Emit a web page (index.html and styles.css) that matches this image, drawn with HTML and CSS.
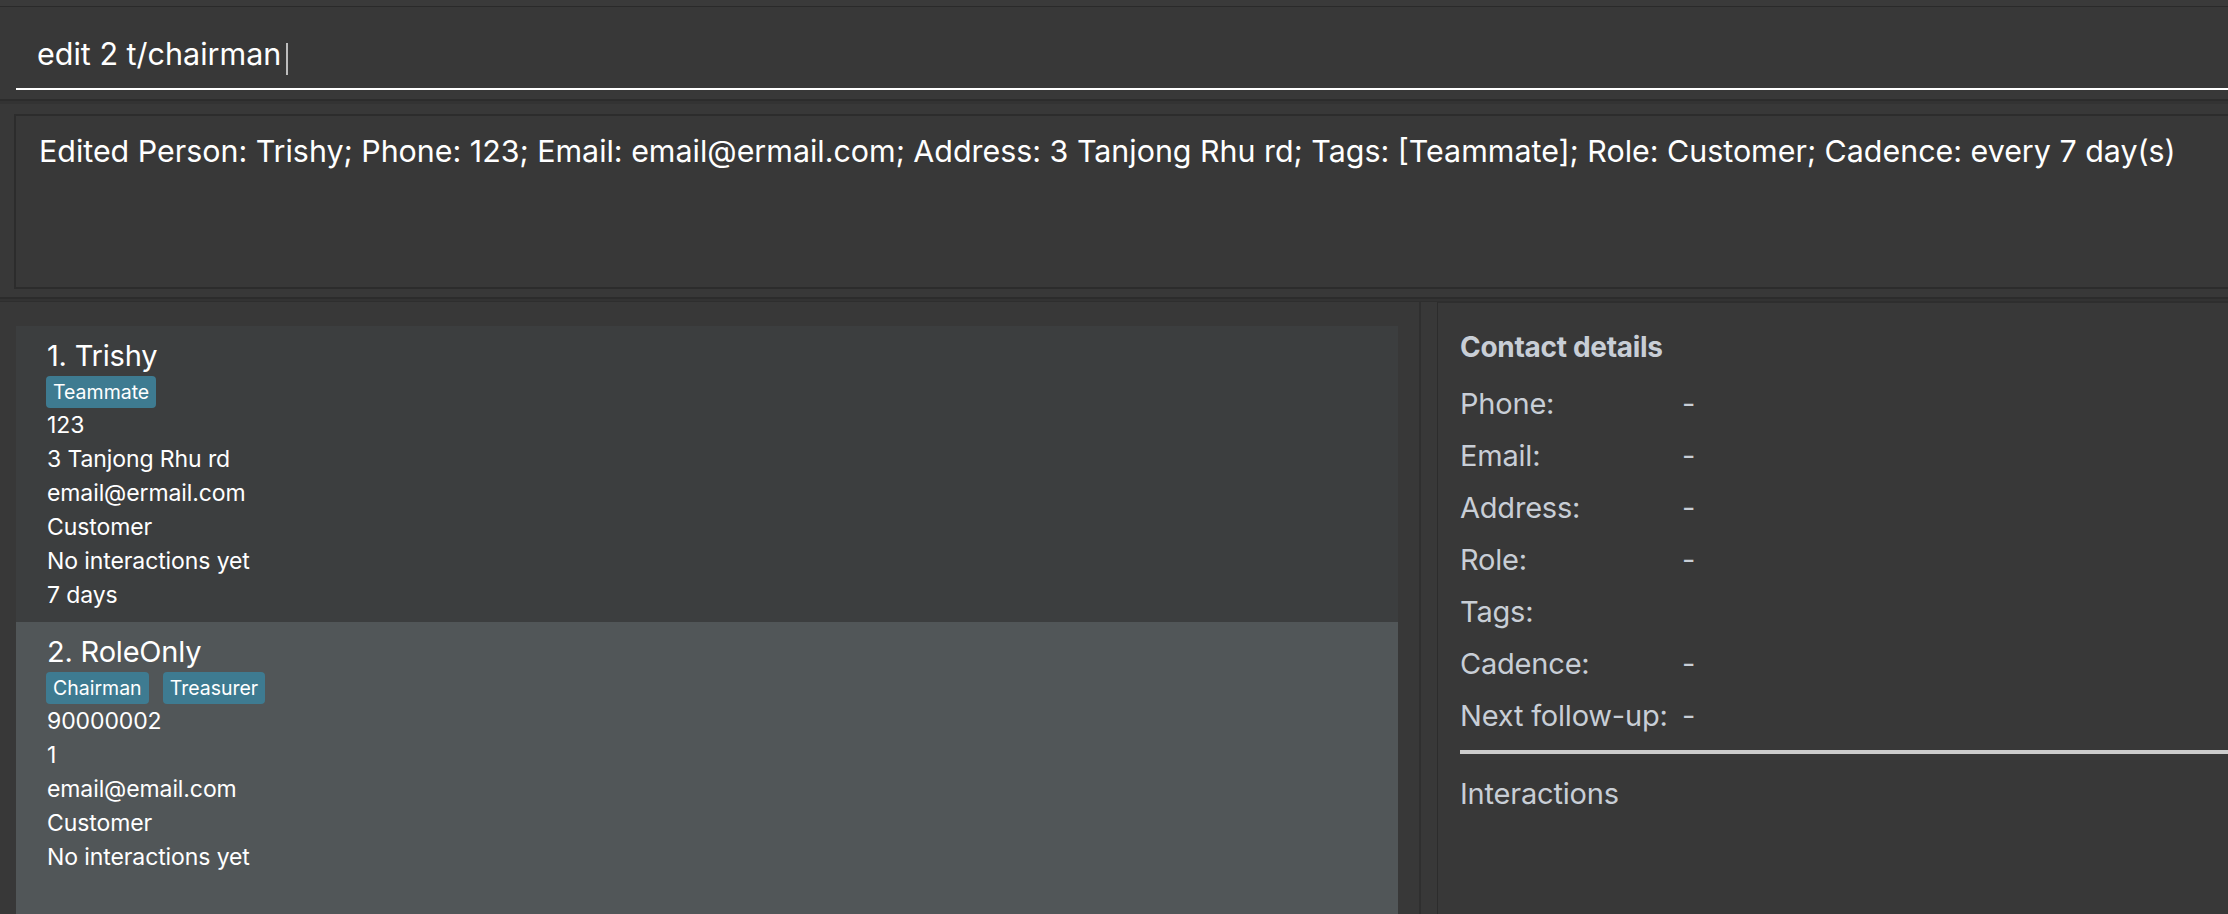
FILE: index.html
```html
<!DOCTYPE html>
<html lang="en">
<head>
<meta charset="utf-8">
<title>Address Book</title>
<link rel="stylesheet" href="styles.css">
</head>
<body>
<div class="app">
  <div class="topbar"></div>
  <div class="command-area">
    <div class="command-box"><span class="cmd-text">edit 2 t/chairman</span><span class="caret"></span></div>
  </div>
  <div class="hsplit"></div>
  <div class="result-area">
    <div class="result-box">Edited Person: Trishy; Phone: 123; Email: email@ermail.com; Address: 3 Tanjong Rhu rd; Tags: [Teammate]; Role: Customer; Cadence: every 7 day(s)</div>
  </div>
  <div class="hsplit lower"></div>
  <div class="main">
    <div class="list-panel">
      <div class="card even">
        <div class="name">1. Trishy</div>
        <div class="tags"><span class="tag">Teammate</span></div>
        <div class="field">123</div>
        <div class="field">3 Tanjong Rhu rd</div>
        <div class="field">email@ermail.com</div>
        <div class="field">Customer</div>
        <div class="field">No interactions yet</div>
        <div class="field">7 days</div>
      </div>
      <div class="card odd">
        <div class="name">2. RoleOnly</div>
        <div class="tags"><span class="tag">Chairman</span><span class="tag">Treasurer</span></div>
        <div class="field">90000002</div>
        <div class="field">1</div>
        <div class="field">email@email.com</div>
        <div class="field">Customer</div>
        <div class="field">No interactions yet</div>
      </div>
    </div>
    <div class="vsplit"></div>
    <div class="detail-panel">
      <div class="detail-title">Contact details</div>
      <div class="detail-grid">
        <div class="label">Phone:</div><div class="value">-</div>
        <div class="label">Email:</div><div class="value">-</div>
        <div class="label">Address:</div><div class="value">-</div>
        <div class="label">Role:</div><div class="value">-</div>
        <div class="label">Tags:</div><div class="value"></div>
        <div class="label">Cadence:</div><div class="value">-</div>
        <div class="label">Next follow-up:</div><div class="value">-</div>
      </div>
      <div class="detail-sep"></div>
      <div class="interactions">Interactions</div>
    </div>
  </div>
</div>
</body>
</html>
```
FILE: styles.css
```css
html, body {
  margin: 0;
  padding: 0;
}
body {
  background: #383838;
  font-family: Inter, "Noto Sans", sans-serif;
  color: #ffffff;
  width: 2228px;
  height: 914px;
  overflow: hidden;
}
.app {
  display: flex;
  flex-direction: column;
  height: 914px;
}
.topbar {
  height: 6px;
  background: #3a3a3a;
  border-bottom: 1px solid #2a2a2a;
  flex: none;
}
.command-area {
  flex: none;
  height: 92px;
  padding-left: 16px;
  box-sizing: border-box;
}
.command-box {
  padding-top: 27px;
  padding-left: 21px;
  height: 54px;
  border-bottom: 2px solid #ffffff;
  display: flex;
  align-items: flex-start;
}
.cmd-text {
  font-size: 30.5px;
  line-height: 40px;
}
.caret {
  display: inline-block;
  width: 2px;
  height: 32px;
  margin-top: 9px;
  margin-left: 5px;
  background: #bdbdbd;
}
.hsplit {
  flex: none;
  height: 3px;
  border-top: 2px solid #2c2c2c;
  background: #333333;
}
.hsplit.lower {
  height: 2px;
  border-bottom: 1px solid #2e2e2e;
}
.result-area {
  flex: none;
  padding: 10px 0 8px 14px;
}
.result-box {
  border: 2px solid #2c2c2c;
  border-right: none;
  padding: 17px 0 0 23px;
  box-sizing: border-box;
  height: 175px;
  font-size: 30.4px;
  line-height: 36px;
  white-space: nowrap;
}
.main {
  flex: 1;
  display: flex;
  min-height: 0;
}
.list-panel {
  width: 1419px;
  flex: none;
  box-sizing: border-box;
  padding: 24px 21px 0 16px;
  display: flex;
  flex-direction: column;
}
.card {
  padding: 10px 0 10px 31px;
}
.card.even { background: #3c3e3f; }
.card.odd { background: #515658; flex: 1; }
.name {
  font-size: 29px;
  line-height: 40px;
  letter-spacing: -0.2px;
}
.tags {
  display: flex;
  gap: 14px;
  margin-left: -1px;
}
.tag {
  background: #3e7b91;
  border-radius: 4px;
  height: 32px;
  line-height: 32px;
  padding: 0 7px;
  font-size: 19.5px;
}
.field {
  font-size: 23px;
  line-height: 34px;
  letter-spacing: -0.1px;
}
.vsplit {
  flex: none;
  width: 16px;
  border-left: 2px solid #2f2f2f;
  border-right: 1px solid #2c2c2c;
  background: #383838;
}
.detail-panel {
  flex: 1;
  padding: 26px 0 0 22px;
  color: #c8ced6;
  border-top: 1px solid #2e2e2e;
}
.detail-title {
  font-size: 28px;
  line-height: 36px;
  font-weight: 700;
  letter-spacing: -0.3px;
}
.detail-grid {
  margin-top: 13px;
  display: grid;
  grid-template-columns: 222px 1fr;
  grid-auto-rows: 52px;
  font-size: 29px;
  line-height: 52px;
  letter-spacing: -0.2px;
}
.detail-sep {
  margin-top: 8px;
  height: 4px;
  background: #cccccc;
}
.interactions {
  margin-top: 20px;
  font-size: 29px;
  line-height: 40px;
  letter-spacing: -0.2px;
}
```
